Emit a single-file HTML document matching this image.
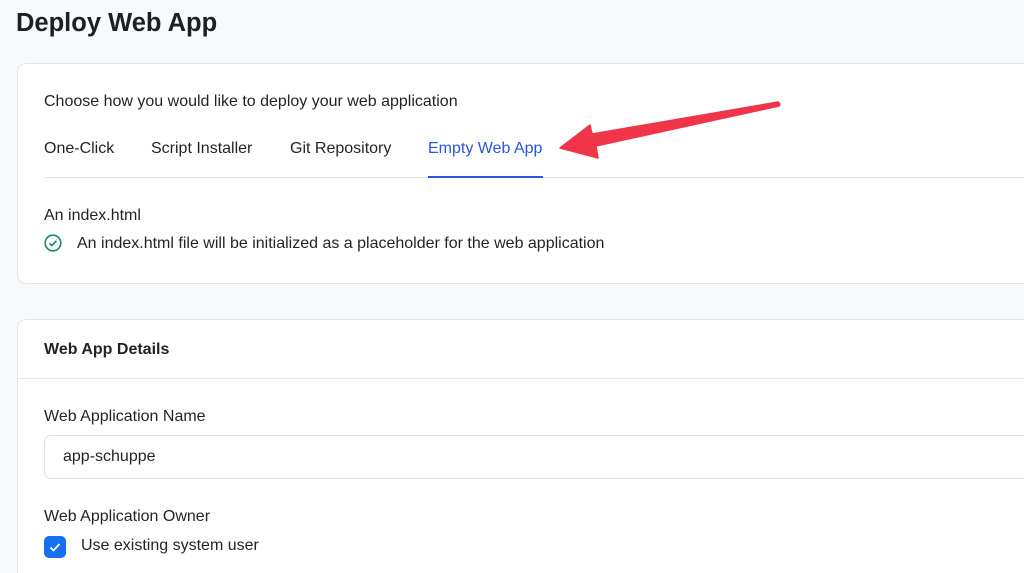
<!DOCTYPE html>
<html><head><style>
html,body{margin:0;width:1024px;height:573px;overflow:hidden}
body{background:#f8f9fb;font-family:"Liberation Sans",sans-serif;color:#1f2328;position:relative}
.a{position:absolute;white-space:nowrap}
.card{position:absolute;left:17px;width:1030px;background:#fff;border:1px solid #e3e5e9;border-radius:9px}
</style></head><body>
<div class="a" style="left:16px;top:9px;font-size:25.5px;font-weight:bold;color:#1d1f23">Deploy Web App</div>
<div class="card" style="top:63px;height:219px">
 <div class="a" style="left:26px;top:29px;font-size:16px">Choose how you would like to deploy your web application</div>
 <div class="a" style="left:26px;top:76px;font-size:16px">One-Click</div>
 <div class="a" style="left:133px;top:76px;font-size:16px">Script Installer</div>
 <div class="a" style="left:272px;top:76px;font-size:16px">Git Repository</div>
 <div class="a" style="left:410px;top:76px;font-size:16px;color:#2a55e0">Empty Web App</div>
 <div class="a" style="left:26px;top:113px;width:1010px;height:1px;background:#e3e5e9"></div>
 <div class="a" style="left:410px;top:112px;width:115px;height:2px;background:#2a55e0"></div>
 <div class="a" style="left:26px;top:143px;font-size:16px">An index.html</div>
 <svg class="a" style="left:26px;top:170px" width="18" height="18" viewBox="0 0 18 18"><circle cx="9" cy="9" r="7.8" fill="none" stroke="#1a8a5a" stroke-width="1.6"/><path d="M5.5 9.3l2.3 2.3 4.6-4.8" fill="none" stroke="#1a8a5a" stroke-width="1.6"/></svg>
 <div class="a" style="left:59px;top:171px;font-size:16px">An index.html file will be initialized as a placeholder for the web application</div>
</div>
<div class="card" style="top:319px;height:260px">
 <div class="a" style="left:26px;top:21px;font-size:16px;font-weight:bold">Web App Details</div>
 <div class="a" style="left:0;top:58px;width:1030px;height:1px;background:#e3e5e9"></div>
 <div class="a" style="left:26px;top:88px;font-size:16px">Web Application Name</div>
 <div class="a" style="left:26px;top:115px;width:1000px;height:42px;border:1px solid #e0e2e6;border-radius:7px"></div>
 <div class="a" style="left:45px;top:128px;font-size:16px">app-schuppe</div>
 <div class="a" style="left:26px;top:188px;font-size:16px">Web Application Owner</div>
 <div class="a" style="left:26px;top:216px;width:22px;height:22px;background:#1570ef;border-radius:5px"></div>
 <svg class="a" style="left:26px;top:216px" width="22" height="22"><path d="M6.5 11.5l3 3 6-6.5" fill="none" stroke="#fff" stroke-width="1.8"/></svg>
 <div class="a" style="left:63px;top:217px;font-size:16px">Use existing system user</div>
</div>
<svg class="a" style="left:0;top:0" width="1024" height="573"><path d="M560 148 L590 125 L592 134 L778 102 Q781 104 779 106 L596 146 L598 158 Z" fill="#f0354a" stroke="#f0354a" stroke-width="1.5" stroke-linejoin="round"/></svg>
</body></html>
